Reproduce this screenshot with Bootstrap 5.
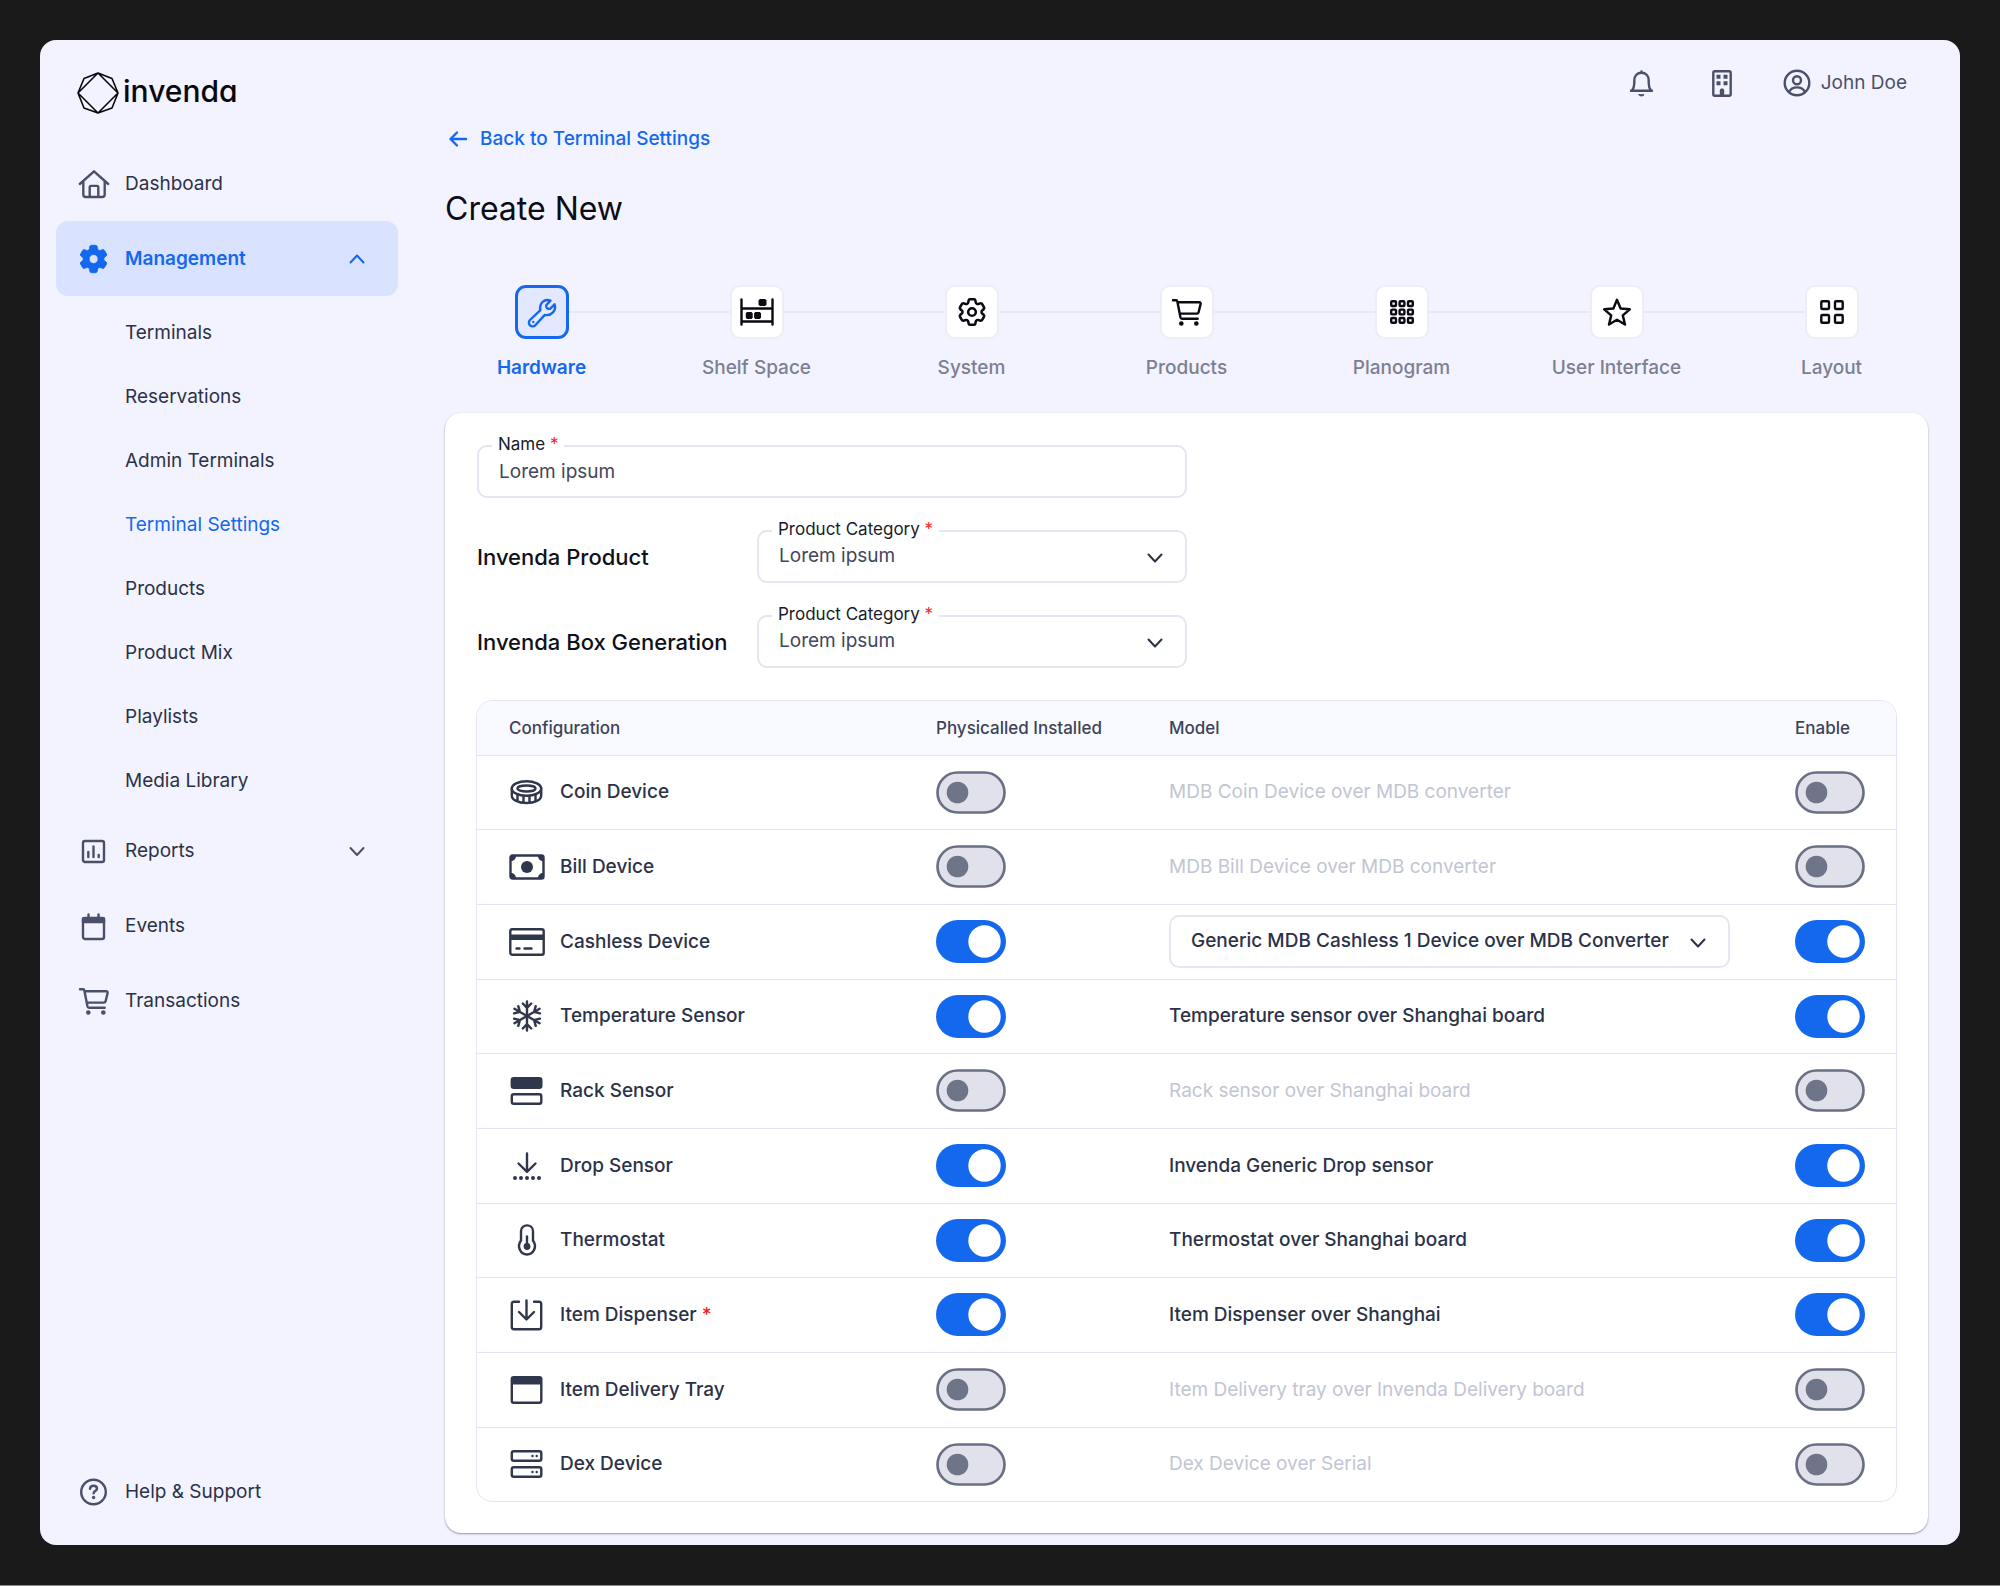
<!DOCTYPE html>
<html lang="en">
<head>
<meta charset="utf-8">
<meta name="viewport" content="width=device-width, initial-scale=1">
<title>Create New</title>
<link rel="stylesheet" href="https://cdn.jsdelivr.net/npm/bootstrap@5.3.0/dist/css/bootstrap.min.css">
<style>
:root{--brand:#1468ee;--ink:#2b3248;--line:#e5e5f0}
body{font-family:Inter,"Liberation Sans",sans-serif;font-size:19px;line-height:28px;color:var(--ink);background:#1a1a1a;padding:40px;min-height:100vh;border-bottom:1px solid #8c8c8c}
svg{display:block;flex:none;fill:none;stroke:currentColor;stroke-width:2.4;stroke-linecap:round;stroke-linejoin:round}
.solid{fill:currentColor;stroke:none}
.thin{stroke-width:1.8}
.dots-lg{stroke-width:4}
.shell{background:#f3f3ff;border-radius:16px}
.side{width:374px;padding:32px 16px 16px;flex:none}
.brand{height:42px;margin:0 0 32px 21px;gap:4px;color:#08080c;text-decoration:none;font-size:30px;font-weight:500;font-feature-settings:"cv11"}
.brand svg{stroke-width:1.6}
.brand span{padding-bottom:4px}
.side .nav-link{height:75px;padding:0 31px 0 22px;gap:15px;color:var(--ink);border-radius:12px}
.side .nav-link svg{color:#4a5069}
.side .nav-link.active{background:#d9e2ff;color:var(--brand);font-weight:600}
.side .nav-link.active svg{color:var(--brand)}
.side .submenu{margin-top:5px}
.side .submenu .nav-link{height:64px;padding-left:69px}
.side .submenu .current{color:var(--brand)}
.content{padding:27px 32px 12px 31px;min-width:0}
.topbar{padding-right:21px;color:#4a5069;gap:43px}
.topbar button{color:inherit;font-size:inherit}
.tools{gap:49px}
.back{margin-top:25px;gap:12px;color:var(--brand);text-decoration:none;font-weight:500;height:29px;padding-left:3px}
h1{font-size:32px;line-height:40px;font-weight:400;margin:36px 0 56px;color:#0c0d14}
.steps{margin:0 -11px}
.step{color:#7b8093;font-weight:500;text-decoration:none}
.step .rail{height:54px;margin-bottom:15px}
.step .rail::before,.step .rail::after{content:"";flex:1;height:2px;background:#e8e8f2}
.step:first-child .rail::before,.step:last-child .rail::after{background:none}
.tile{width:54px;height:54px;background:#fff;border:2px solid #ededf6;border-radius:10px;color:#0a0b12}
.step.on{color:var(--brand);font-weight:600}
.step.on .tile{background:#e2e8ff;border:3px solid var(--brand);border-radius:11px;color:var(--brand)}
.panel{margin-top:31px;padding:32px 32px 31px;background:#fff;border-radius:16px;box-shadow:0 1px 2px #8d93a6}
.field{height:53px}
.field .form-control,.field .form-select,.pick{height:53px;border:2px solid #e6e5f1;border-radius:10px;font-size:19px;color:#41475c;padding:0 20px 0 20px}
.field .form-select,.pick{--bs-form-select-bg-img:url("data:image/svg+xml,%3Csvg xmlns='http://www.w3.org/2000/svg' viewBox='0 0 20 20'%3E%3Cpath fill='none' stroke='%232b3248' stroke-width='2' stroke-linecap='round' stroke-linejoin='round' d='M3.5 7.5l6.500 7 6.500-7'/%3E%3C/svg%3E");background-size:20px;background-position:right 20px center;padding-right:44px}
.pick{color:var(--ink);font-weight:500;max-width:561px}
.field label{left:15px;top:-13px;padding:0 6px;background:#fff;font-size:17px;line-height:24px;color:#171b2c}
.req{color:#f5222d}
.rowname{width:280px;font-size:22px;font-weight:500;color:#0f111a}
.formrow{margin-top:32px}
.sheet{margin:32px -1px 0;border:1px solid var(--line);border-radius:16px;overflow:hidden}
.sheet table{margin:0;table-layout:fixed;color:var(--ink);--bs-table-color:var(--ink)}
.sheet th,.sheet td{padding:0;vertical-align:middle;border-bottom:1px solid var(--line);color:inherit}
.sheet th:first-child,.sheet td:first-child{padding-left:32px}
.sheet thead th{height:54px;background:#f9faff;font-size:17px;font-weight:500;color:#3d4359}
.sheet tbody td{height:75px}
.sheet tbody tr:nth-child(3n+1) td{height:74px}
.sheet tbody tr:last-child td{border-bottom:0}
.c1{width:459px}.c2{width:233px}.c4{width:101px}
.device{gap:15px;font-weight:500}
.device svg{color:#30364b}
.model{font-weight:500}
.off .model{color:#c2c5d4;font-weight:400}
.switch{width:70px;height:43px;margin:0;display:block;border:0;border-radius:22px;background:url("data:image/svg+xml,%3Csvg xmlns='http://www.w3.org/2000/svg' viewBox='0 0 70 43'%3E%3Crect x='1.5' y='1.5' width='67' height='40' rx='20' fill='%23e1e1ec' stroke='%236a7084' stroke-width='2.7'/%3E%3Ccircle cx='21.5' cy='21.5' r='10.8' fill='%236f7588'/%3E%3C/svg%3E") center/100% 100% no-repeat}
.switch:checked{background:url("data:image/svg+xml,%3Csvg xmlns='http://www.w3.org/2000/svg' viewBox='0 0 70 43'%3E%3Crect width='70' height='43' rx='21.5' fill='%231468ee'/%3E%3Ccircle cx='48.5' cy='21.5' r='16.2' fill='%23fff'/%3E%3C/svg%3E") center/100% 100% no-repeat}
</style>
<script src="https://cdn.jsdelivr.net/npm/bootstrap@5.3.0/dist/js/bootstrap.bundle.min.js"></script>
</head>
<body class="d-flex flex-column">
<svg class="d-none" aria-hidden="true">
  <symbol id="gear" viewBox="0 0 24 24"><path d="M9.594 3.94c.09-.542.56-.94 1.11-.94h2.593c.55 0 1.02.398 1.11.94l.213 1.281c.063.374.313.686.645.87.074.04.147.083.22.127.325.196.72.257 1.075.124l1.217-.456a1.125 1.125 0 0 1 1.37.49l1.296 2.247a1.125 1.125 0 0 1-.26 1.431l-1.003.827c-.293.241-.438.613-.43.992a7.723 7.723 0 0 1 0 .255c-.008.378.137.75.43.991l1.004.827c.424.35.534.955.26 1.43l-1.298 2.247a1.125 1.125 0 0 1-1.369.491l-1.217-.456c-.355-.133-.75-.072-1.076.124a6.47 6.47 0 0 1-.22.128c-.331.183-.581.495-.644.869l-.213 1.281c-.09.543-.56.94-1.11.94h-2.594c-.55 0-1.019-.398-1.11-.94l-.213-1.281c-.062-.374-.312-.686-.644-.87a6.52 6.52 0 0 1-.22-.127c-.325-.196-.72-.257-1.076-.124l-1.217.456a1.125 1.125 0 0 1-1.369-.49l-1.297-2.247a1.125 1.125 0 0 1 .26-1.431l1.004-.827c.292-.24.437-.613.43-.991a6.932 6.932 0 0 1 0-.255c.007-.38-.138-.751-.43-.992l-1.004-.827a1.125 1.125 0 0 1-.26-1.43l1.297-2.247a1.125 1.125 0 0 1 1.37-.491l1.216.456c.356.133.751.072 1.076-.124.072-.044.146-.086.22-.128.332-.183.582-.495.644-.869l.214-1.28Z"/><circle cx="12" cy="12" r="2.7"/></symbol>
  <symbol id="cart" viewBox="0 0 32 32"><path d="M2 4.3h3.2c.6 0 1 .3 1.100 1l3.200 16.200c.2.800.7 1.200 1.500 1.200h15.700M7 6.300h21.200c1.100 0 1.600.7 1.400 1.600l-2 8.300c-.2.900-.8 1.400-1.800 1.400H9"/><circle cx="10.300" cy="27.500" r="2.300" stroke="none" fill="currentColor"/><circle cx="25.300" cy="27.500" r="2.300" stroke="none" fill="currentColor"/></symbol>
</svg>

<div class="shell d-flex flex-grow-1">
  <aside class="side d-flex flex-column">
    <a class="brand d-flex align-items-center" href="#">
      <svg width="42" height="42" viewBox="0 0 42 42"><path d="M21 1L35 6.500 41 21 35 36 21 41 7 36 1 21 7 6.500ZM21 1L41 21 21 41 1 21Z"/></svg>
      <span>invenda</span>
    </a>
    <nav class="nav flex-column flex-nowrap flex-grow-1">
      <a class="nav-link d-flex align-items-center" href="#"><svg width="32" height="32"><path d="M1.800 16L16 3.300 30.200 16M5.300 13.500V26.500c0 1.500 1 2.500 2.500 2.500h16.400c1.500 0 2.500-1 2.500-2.500V13.500M11.700 29V19.200c0-.8.500-1.300 1.300-1.300h6c.8 0 1.300.5 1.300 1.300V29"/></svg>Dashboard</a>
      <a class="nav-link active d-flex align-items-center" href="#"><svg width="32" height="32" viewBox="1.800 1.500 21 21"><path fill="currentColor" stroke="currentColor" stroke-width=".6" fill-rule="evenodd" class="thin-fill" d="M9.594 3.940c.09-.542.56-.94 1.110-.94h2.593c.55 0 1.020.398 1.110.94l.213 1.281c.063.374.313.686.645.87.074.04.147.083.22.127.325.196.72.257 1.075.124l1.217-.456a1.125 1.125 0 0 1 1.370.49l1.296 2.247a1.125 1.125 0 0 1-.26 1.431l-1.003.827c-.293.241-.438.613-.43.992a7.723 7.723 0 0 1 0 .255c-.008.378.137.75.43.991l1.004.827c.424.35.534.955.26 1.430l-1.298 2.247a1.125 1.125 0 0 1-1.369.491l-1.217-.456c-.355-.133-.75-.072-1.076.124a6.470 6.470 0 0 1-.22.128c-.331.183-.581.495-.644.869l-.213 1.281c-.09.543-.56.94-1.110.94h-2.594c-.55 0-1.019-.398-1.110-.94l-.213-1.281c-.062-.374-.312-.686-.644-.87a6.520 6.520 0 0 1-.22-.127c-.325-.196-.72-.257-1.076-.124l-1.217.456a1.125 1.125 0 0 1-1.369-.49l-1.297-2.247a1.125 1.125 0 0 1 .26-1.431l1.004-.827c.292-.24.437-.613.43-.991a6.932 6.932 0 0 1 0-.255c.007-.38-.138-.751-.43-.992l-1.004-.827a1.125 1.125 0 0 1-.26-1.430l1.297-2.247a1.125 1.125 0 0 1 1.370-.491l1.216.456c.356.133.751.072 1.076-.124.072-.044.146-.086.22-.128.332-.183.582-.495.644-.869l.214-1.280ZM9 12a3 3 0 0 0 6 0a3 3 0 0 0-6 0Z"/></svg>Management<svg class="ms-auto" width="20" height="20"><path stroke-width="2" d="M3.500 13.500L10 6.500l6.500 7"/></svg></a>
      <div class="submenu nav flex-column">
        <a class="nav-link d-flex align-items-center" href="#">Terminals</a>
        <a class="nav-link d-flex align-items-center" href="#">Reservations</a>
        <a class="nav-link d-flex align-items-center" href="#">Admin Terminals</a>
        <a class="nav-link current d-flex align-items-center" href="#">Terminal Settings</a>
        <a class="nav-link d-flex align-items-center" href="#">Products</a>
        <a class="nav-link d-flex align-items-center" href="#">Product Mix</a>
        <a class="nav-link d-flex align-items-center" href="#">Playlists</a>
        <a class="nav-link d-flex align-items-center" href="#">Media Library</a>
      </div>
      <a class="nav-link d-flex align-items-center" href="#"><svg width="32" height="32"><rect x="5" y="6" width="21" height="21" rx="2"/><path d="M10.300 17v5M15.500 11.500V22M20.700 20v2"/></svg>Reports<svg class="ms-auto" width="20" height="20"><path stroke-width="2" d="M3.500 7l6.500 7 6.500-7"/></svg></a>
      <a class="nav-link d-flex align-items-center" href="#"><svg width="32" height="32"><rect x="5" y="8" width="21" height="21" rx="2"/><path d="M10.500 4.500V8M20.500 4.500V8"/><path fill="currentColor" d="M5 8.500h21v3.500H5Z"/></svg>Events</a>
      <a class="nav-link d-flex align-items-center" href="#"><svg width="32" height="32"><use href="#cart"/></svg>Transactions</a>
      <a class="nav-link d-flex align-items-center mt-auto" href="#"><svg width="32" height="32"><circle cx="15.500" cy="16" r="12.300"/><path d="M12 12.800c.2-2 1.600-3 3.500-3s3.500 1.100 3.500 2.900c0 2.300-3.400 2.400-3.400 4.600"/><circle cx="15.600" cy="21.500" r="1.700" fill="currentColor" stroke="none"/></svg>Help &amp; Support</a>
    </nav>
  </aside>

  <main class="content flex-grow-1 d-flex flex-column">
    <div class="topbar d-flex justify-content-end align-items-center">
      <div class="tools d-flex">
        <button type="button" class="btn p-0 border-0" aria-label="Notifications"><svg width="32" height="32"><path d="M6 23.800h21M7 23.500c2-2.500 2.300-4.500 2.300-7.500v-2.500c0-4.700 3-7.700 7.200-7.700s7.200 3 7.200 7.700V16c0 3 .3 5 2.300 7.500M16.500 5.500V4.500"/><path fill="currentColor" stroke-width="1" d="M14 27.700h5c-.5 1-1.300 1.200-2.500 1.200s-2-.2-2.500-1.200Z"/></svg></button>
        <button type="button" class="btn p-0 border-0" aria-label="Company"><svg width="32" height="32"><rect x="7.300" y="4.300" width="17.400" height="24.400" rx="1.500"/><path stroke="none" fill="currentColor" d="M10.500 7.700h4v4h-4zM17.500 7.700h4v4h-4zM10.500 14.300h4v4h-4zM17.500 14.300h4v4h-4zM13.800 29v-5.500c0-2.600 4.400-2.600 4.400 0V29z"/></svg></button>
      </div>
      <button type="button" class="btn p-0 border-0 d-flex align-items-center gap-2"><svg width="32" height="32"><circle cx="16" cy="16" r="12.300"/><circle cx="16" cy="13.300" r="4"/><path d="M8 25c1.500-3 4.500-4.600 8-4.600s6.500 1.600 8 4.600"/></svg>John Doe</button>
    </div>

    <a class="back d-flex align-items-center align-self-start" href="#"><svg width="20" height="20"><path d="M18 10H2.500M9 3.500L2.500 10 9 16.500"/></svg>Back to Terminal Settings</a>
    <h1>Create New</h1>

    <div class="steps d-flex text-center">
      <a href="#" class="step on col p-0"><div class="rail d-flex align-items-center"><span class="tile d-flex align-items-center justify-content-center"><svg width="32" height="32"><path d="M24.500 4.600C18.500 2.300 13 7 14.400 14.200L4 24a3.700 3.700 0 0 0 5.300 5.300L18.800 18.900C25.500 20.200 30.500 14.500 28.600 8.300L24 12.800C21.500 13.300 19.800 11.700 20.200 9.200Z"/><path d="M7.300 26v.1"/></svg></span></div>Hardware</a>
      <a href="#" class="step col p-0"><div class="rail d-flex align-items-center"><span class="tile d-flex align-items-center justify-content-center"><svg width="34" height="28"><path d="M1.500 1.500v25M32.500 1.500v25M1.500 10.500h31M1.500 23.500h31"/><path class="solid" d="M20 1h5l1.500 1.200v4.600L25 8h-5l-1.500-1.200V2.200zM7 14h4.500l1.200 1.200v4.600L11.500 21H7l-1.200-1.200v-4.600zM15.300 14h4.500l1.200 1.200v4.600L19.800 21h-4.500l-1.200-1.200v-4.600z"/></svg></span></div>Shelf Space</a>
      <a href="#" class="step col p-0"><div class="rail d-flex align-items-center"><span class="tile d-flex align-items-center justify-content-center"><svg class="thin" width="34" height="34"><use href="#gear"/></svg></span></div>System</a>
      <a href="#" class="step col p-0"><div class="rail d-flex align-items-center"><span class="tile d-flex align-items-center justify-content-center"><svg width="32" height="32"><use href="#cart"/></svg></span></div>Products</a>
      <a href="#" class="step col p-0"><div class="rail d-flex align-items-center"><span class="tile d-flex align-items-center justify-content-center"><svg width="24" height="24"><rect x="1.200" y="1.200" width="4.800" height="4.800" rx="1"/><rect x="9.600" y="1.200" width="4.800" height="4.800" rx="1"/><rect x="18" y="1.200" width="4.800" height="4.800" rx="1"/><rect x="1.200" y="9.600" width="4.800" height="4.800" rx="1"/><rect x="9.600" y="9.600" width="4.800" height="4.800" rx="1"/><rect x="18" y="9.600" width="4.800" height="4.800" rx="1"/><rect x="1.200" y="18" width="4.800" height="4.800" rx="1"/><rect x="9.600" y="18" width="4.800" height="4.800" rx="1"/><rect x="18" y="18" width="4.800" height="4.800" rx="1"/></svg></span></div>Planogram</a>
      <a href="#" class="step col p-0"><div class="rail d-flex align-items-center"><span class="tile d-flex align-items-center justify-content-center"><svg width="32" height="32"><path d="M16 3.800l3.600 8.700 9.200.8-7 6.100 2.200 9.200-8-4.900-8 4.900 2.200-9.200-7-6.100 9.200-.8z"/></svg></span></div>User Interface</a>
      <a href="#" class="step col p-0"><div class="rail d-flex align-items-center"><span class="tile d-flex align-items-center justify-content-center"><svg width="24" height="24"><rect x="1.300" y="1.300" width="7.700" height="7.700" rx="1"/><rect x="15" y="1.300" width="7.700" height="7.700" rx="1"/><rect x="1.300" y="15" width="7.700" height="7.700" rx="1"/><rect x="15" y="15" width="7.700" height="7.700" rx="1"/></svg></span></div>Layout</a>
    </div>

    <section class="panel flex-grow-1">
      <form class="w-50">
        <div class="field position-relative">
          <input type="text" class="form-control" id="name" value="Lorem ipsum">
          <label for="name" class="position-absolute">Name <span class="req">*</span></label>
        </div>
        <div class="formrow d-flex align-items-center">
          <div class="rowname">Invenda Product</div>
          <div class="field position-relative flex-grow-1">
            <select class="form-select" id="product"><option>Lorem ipsum</option></select>
            <label for="product" class="position-absolute">Product Category <span class="req">*</span></label>
          </div>
        </div>
        <div class="formrow d-flex align-items-center">
          <div class="rowname">Invenda Box Generation</div>
          <div class="field position-relative flex-grow-1">
            <select class="form-select" id="generation"><option>Lorem ipsum</option></select>
            <label for="generation" class="position-absolute">Product Category <span class="req">*</span></label>
          </div>
        </div>
      </form>

      <div class="sheet">
        <table class="table">
          <colgroup><col class="c1"><col class="c2"><col><col class="c4"></colgroup>
          <thead><tr><th>Configuration</th><th>Physicalled Installed</th><th>Model</th><th>Enable</th></tr></thead>
          <tbody>
            <tr class="off">
              <td><div class="device d-flex align-items-center"><svg width="36" height="32"><ellipse cx="17.500" cy="12.500" rx="14.700" ry="7.300"/><ellipse cx="17.500" cy="12.500" rx="9" ry="3"/><path d="M2.800 12.500v7c0 4.500 6.500 7.500 14.700 7.500s14.700-3 14.700-7.500v-7M8.500 19v5.500M14.500 20.500v6M20.500 20.500v6M26.500 19v5.500"/></svg>Coin Device</div></td>
              <td><input class="form-check-input switch" type="checkbox" role="switch" aria-label="Coin Device installed"></td>
              <td class="model">MDB Coin Device over MDB converter</td>
              <td><input class="form-check-input switch" type="checkbox" role="switch" aria-label="Enable Coin Device"></td>
            </tr>
            <tr class="off">
              <td><div class="device d-flex align-items-center"><svg width="36" height="32"><rect x="1.500" y="4.500" width="33" height="23" rx="2"/><circle cx="18" cy="16" r="6" class="solid"/><path class="solid" d="M2 5h5c0 3-2.500 5-5 5zM34 5h-5c0 3 2.500 5 5 5zM2 27h5c0-3-2.500-5-5-5zM34 27h-5c0-3 2.500-5 5-5z"/></svg>Bill Device</div></td>
              <td><input class="form-check-input switch" type="checkbox" role="switch" aria-label="Bill Device installed"></td>
              <td class="model">MDB Bill Device over MDB converter</td>
              <td><input class="form-check-input switch" type="checkbox" role="switch" aria-label="Enable Bill Device"></td>
            </tr>
            <tr>
              <td><div class="device d-flex align-items-center"><svg width="36" height="32"><rect x="1.300" y="3.300" width="33.400" height="25.400" rx="2"/><path class="solid" d="M2 8.500h32v5.500H2z"/><path d="M7.500 22.500h3M15.500 22.500h7"/></svg>Cashless Device</div></td>
              <td><input class="form-check-input switch" type="checkbox" role="switch" aria-label="Cashless Device installed" checked></td>
              <td><select class="form-select pick" aria-label="Cashless Device model"><option>Generic MDB Cashless 1 Device over MDB Converter</option></select></td>
              <td><input class="form-check-input switch" type="checkbox" role="switch" aria-label="Enable Cashless Device" checked></td>
            </tr>
            <tr>
              <td><div class="device d-flex align-items-center"><svg width="36" height="32"><g id="arm"><path d="M18 16V1.500M13.800 3.500L18 7.800l4.200-4.300M18 16v14.500M13.800 28.500l4.200-4.300 4.200 4.300"/></g><use href="#arm" transform="rotate(60 18 16)"/><use href="#arm" transform="rotate(120 18 16)"/></svg>Temperature Sensor</div></td>
              <td><input class="form-check-input switch" type="checkbox" role="switch" aria-label="Temperature Sensor installed" checked></td>
              <td class="model">Temperature sensor over Shanghai board</td>
              <td><input class="form-check-input switch" type="checkbox" role="switch" aria-label="Enable Temperature Sensor" checked></td>
            </tr>
            <tr class="off">
              <td><div class="device d-flex align-items-center"><svg width="36" height="32"><rect x="2.800" y="3.300" width="29.500" height="9.400" rx="2" fill="currentColor"/><rect x="2.800" y="19.300" width="29.500" height="9.400" rx="2"/></svg>Rack Sensor</div></td>
              <td><input class="form-check-input switch" type="checkbox" role="switch" aria-label="Rack Sensor installed"></td>
              <td class="model">Rack sensor over Shanghai board</td>
              <td><input class="form-check-input switch" type="checkbox" role="switch" aria-label="Enable Rack Sensor"></td>
            </tr>
            <tr>
              <td><div class="device d-flex align-items-center"><svg width="36" height="32"><path d="M18 3.500v18M9.500 13.500l8.500 8.300 8.500-8.300"/><path class="dots-lg" d="M6 28h.01M12 28h.01M18 28h.01M24 28h.01M30 28h.01"/></svg>Drop Sensor</div></td>
              <td><input class="form-check-input switch" type="checkbox" role="switch" aria-label="Drop Sensor installed" checked></td>
              <td class="model">Invenda Generic Drop sensor</td>
              <td><input class="form-check-input switch" type="checkbox" role="switch" aria-label="Enable Drop Sensor" checked></td>
            </tr>
            <tr>
              <td><div class="device d-flex align-items-center"><svg width="36" height="32"><path d="M12 7.200c0-7.800 12-7.800 12 0v9.300c4.500 6 .5 14-6 14s-10.500-8-6-14z"/><path d="M18 12.500V22"/><circle cx="18" cy="22.500" r="3.400" class="solid"/></svg>Thermostat</div></td>
              <td><input class="form-check-input switch" type="checkbox" role="switch" aria-label="Thermostat installed" checked></td>
              <td class="model">Thermostat over Shanghai board</td>
              <td><input class="form-check-input switch" type="checkbox" role="switch" aria-label="Enable Thermostat" checked></td>
            </tr>
            <tr>
              <td><div class="device d-flex align-items-center"><svg width="36" height="32"><path d="M10 2.800H5c-1.500 0-2.200.8-2.200 2.200v23c0 1.500.8 2.200 2.200 2.200h25c1.500 0 2.200-.8 2.200-2.200V5c0-1.500-.8-2.200-2.200-2.200h-5M17.500 1.500v18M10 13l7.500 7.500L25 13"/></svg><span>Item Dispenser <span class="req">*</span></span></div></td>
              <td><input class="form-check-input switch" type="checkbox" role="switch" aria-label="Item Dispenser installed" checked></td>
              <td class="model">Item Dispenser over Shanghai</td>
              <td><input class="form-check-input switch" type="checkbox" role="switch" aria-label="Enable Item Dispenser" checked></td>
            </tr>
            <tr class="off">
              <td><div class="device d-flex align-items-center"><svg width="36" height="32"><rect x="2.800" y="3.300" width="29.500" height="25.400" rx="2"/><path class="solid" d="M3 3.500h29v7H3z"/></svg>Item Delivery Tray</div></td>
              <td><input class="form-check-input switch" type="checkbox" role="switch" aria-label="Item Delivery Tray installed"></td>
              <td class="model">Item Delivery tray over Invenda Delivery board</td>
              <td><input class="form-check-input switch" type="checkbox" role="switch" aria-label="Enable Item Delivery Tray"></td>
            </tr>
            <tr class="off">
              <td><div class="device d-flex align-items-center"><svg width="36" height="32"><rect x="2.800" y="3.300" width="29.500" height="9.400" rx="2"/><rect x="2.800" y="19.300" width="29.500" height="9.400" rx="2"/><path d="M23.500 8h.01M27.700 8h.01M23.500 24h.01M27.700 24h.01"/></svg>Dex Device</div></td>
              <td><input class="form-check-input switch" type="checkbox" role="switch" aria-label="Dex Device installed"></td>
              <td class="model">Dex Device over Serial</td>
              <td><input class="form-check-input switch" type="checkbox" role="switch" aria-label="Enable Dex Device"></td>
            </tr>
          </tbody>
        </table>
      </div>
    </section>
  </main>
</div>
</body>
</html>
